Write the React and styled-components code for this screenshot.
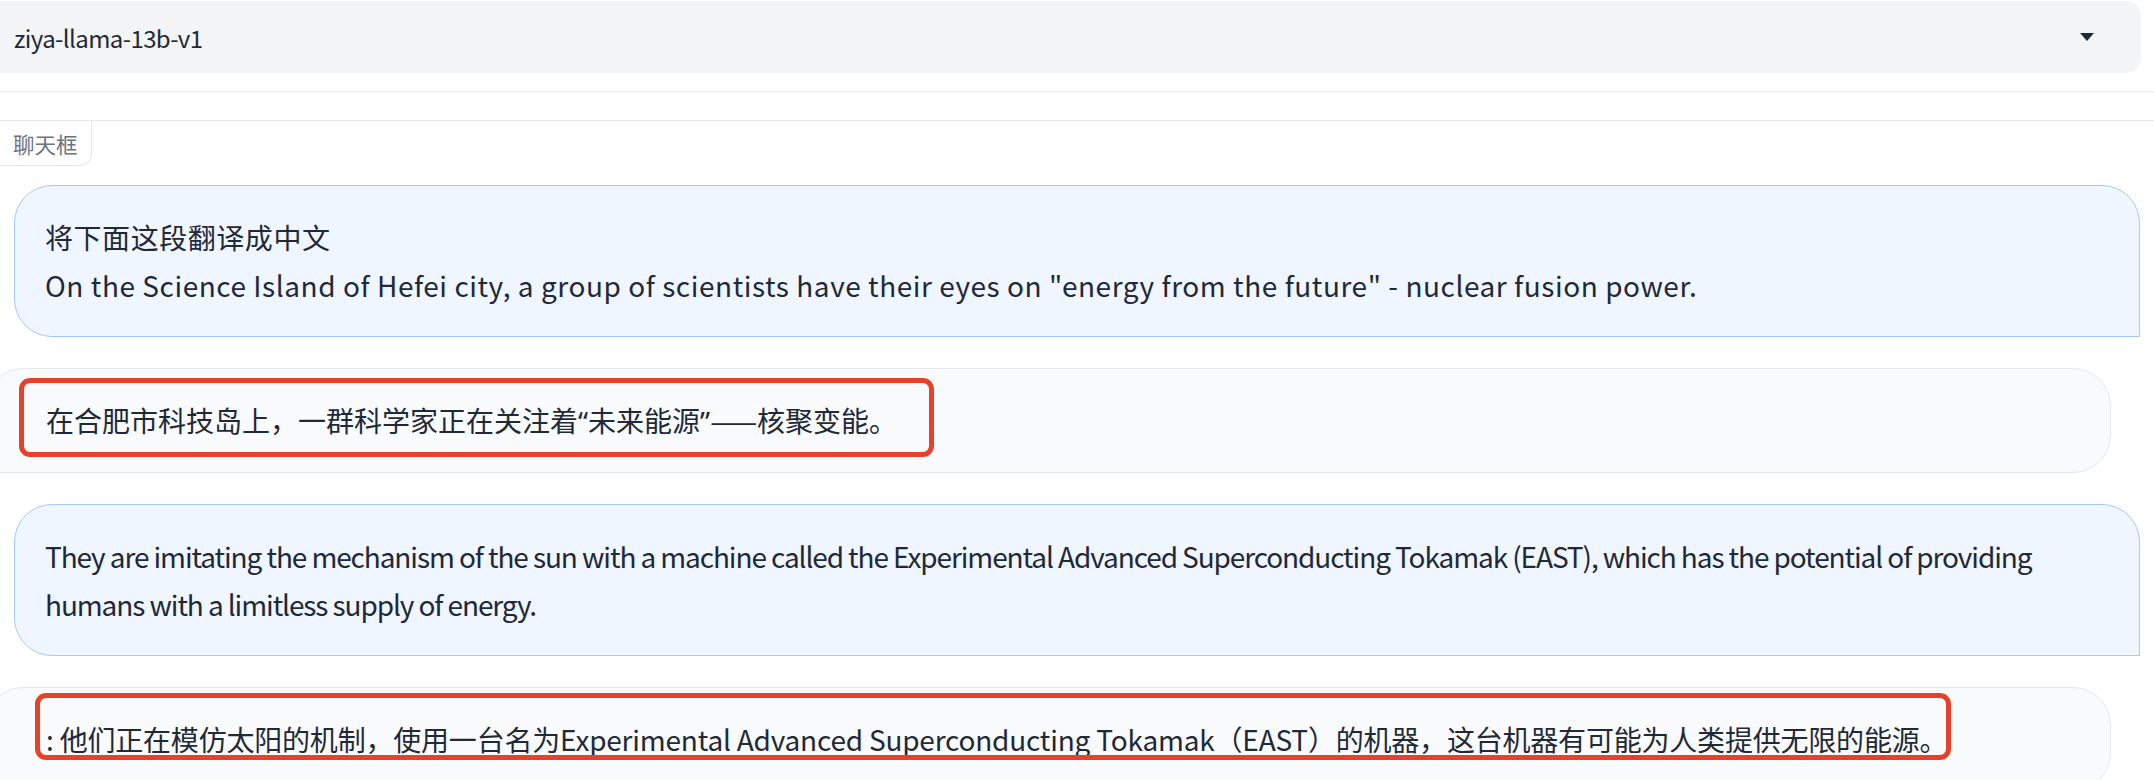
import React from 'react';
import styled, { createGlobalStyle } from 'styled-components';

const GlobalStyle = createGlobalStyle`
    html, body {
        margin: 0;
        padding: 0;
        background: #ffffff;
        overflow: hidden;
    }
    body {
        font-family: "Noto Sans CJK SC", "Noto Sans", sans-serif;
        color: #1f2937;
    }
`

const Page = styled.div`
    width: 2154px;
    height: 780px;
    overflow: hidden;
`

const ModelBlock = styled.div`
    padding: 1px 13px 18px 0;
    border-bottom: 1px solid #e5e7eb;
`

const Select = styled.div`
    height: 72px;
    box-sizing: border-box;
    background-color: #f3f4f6;
    border-radius: 0 15px 15px 0;
    display: flex;
    align-items: center;
    justify-content: space-between;
    padding: 0 47px 0 14px;
    font-size: 24px;
    letter-spacing: -0.6px;
    color: #1f2937;
`

const ChatBlock = styled.div`
    margin-top: 28px;
    border-top: 1px solid #e5e7eb;
`

const BlockLabel = styled.div`
    width: 92px;
    height: 45px;
    box-sizing: border-box;
    display: flex;
    align-items: center;
    padding-left: 13px;
    border-right: 1px solid #e5e7eb;
    border-bottom: 1px solid #e5e7eb;
    border-bottom-right-radius: 12px;
    font-size: 21.5px;
    color: #6b7280;
`

const Messages = styled.div`
    display: flex;
    flex-direction: column;
    gap: 31px;
    padding: 19px 14px 0 0;
`

const Bubble = styled.div`
    position: relative;
    font-size: 28px;
    line-height: 48px;
    letter-spacing: ${(p) => p.$tracking || 0}px;
    color: #1f2937;
    padding: 27px 30px;
    border: 1px solid ${(p) => p.$user ? '#a4c9f8' : '#e5e7eb'};
    background-color: ${(p) => p.$user ? '#eff6ff' : '#f9fafb'};
    border-radius: ${(p) => p.$user ? '38px 38px 0 38px' : '38px 38px 38px 0'};
    margin-left: ${(p) => p.$user ? '14px' : '-15px'};
    margin-right: ${(p) => p.$user ? '0' : '29px'};
    padding-left: ${(p) => p.$user ? '30px' : '60px'};
`

// curly quotes are set narrow, as in the source
const Quote = styled.span`
    font-family: "Noto Sans", sans-serif;
`

// red annotation rectangle drawn over the bot answers
const Marker = styled.div`
    position: absolute;
    left: ${(p) => p.$left}px;
    top: ${(p) => p.$top}px;
    width: ${(p) => p.$width}px;
    height: ${(p) => p.$height}px;
    box-sizing: border-box;
    border: 5px solid #e8412b;
    border-radius: 11px;
    pointer-events: none;
`

function Caret() {
    return (
        <svg width="14" height="8" viewBox="0 0 14 8">
            <polygon points="0,0 14,0 7,8" fill="#1f2937" />
        </svg>
    );
}

function App() {
    return (
        <Page>
            <GlobalStyle />
            <ModelBlock>
                <Select>
                    <span>ziya-llama-13b-v1</span>
                    <Caret />
                </Select>
            </ModelBlock>

            <ChatBlock>
                <BlockLabel>聊天框</BlockLabel>
                <Messages>
                    <Bubble $user $tracking={0.55}>
                        将下面这段翻译成中文<br />
                        On the Science Island of Hefei city, a group of scientists have their eyes on "energy from the future" - nuclear fusion power.
                    </Bubble>

                    <Bubble>
                        在合肥市科技岛上，一群科学家正在关注着<Quote>“</Quote>未来能源<Quote>”</Quote>——核聚变能。
                        <Marker $left={33} $top={9} $width={915} $height={79} />
                    </Bubble>

                    <Bubble $user $tracking={-1.1}>
                        They are imitating the mechanism of the sun with a machine called the Experimental Advanced Superconducting Tokamak (EAST), which has the potential of providing humans with a limitless supply of energy.
                    </Bubble>

                    <Bubble $tracking={-0.2}>
                        : 他们正在模仿太阳的机制，使用一台名为Experimental Advanced Superconducting Tokamak（EAST）的机器，这台机器有可能为人类提供无限的能源。
                        <Marker $left={49} $top={5} $width={1916} $height={67} />
                    </Bubble>
                </Messages>
            </ChatBlock>
        </Page>
    );
}

export default App;
